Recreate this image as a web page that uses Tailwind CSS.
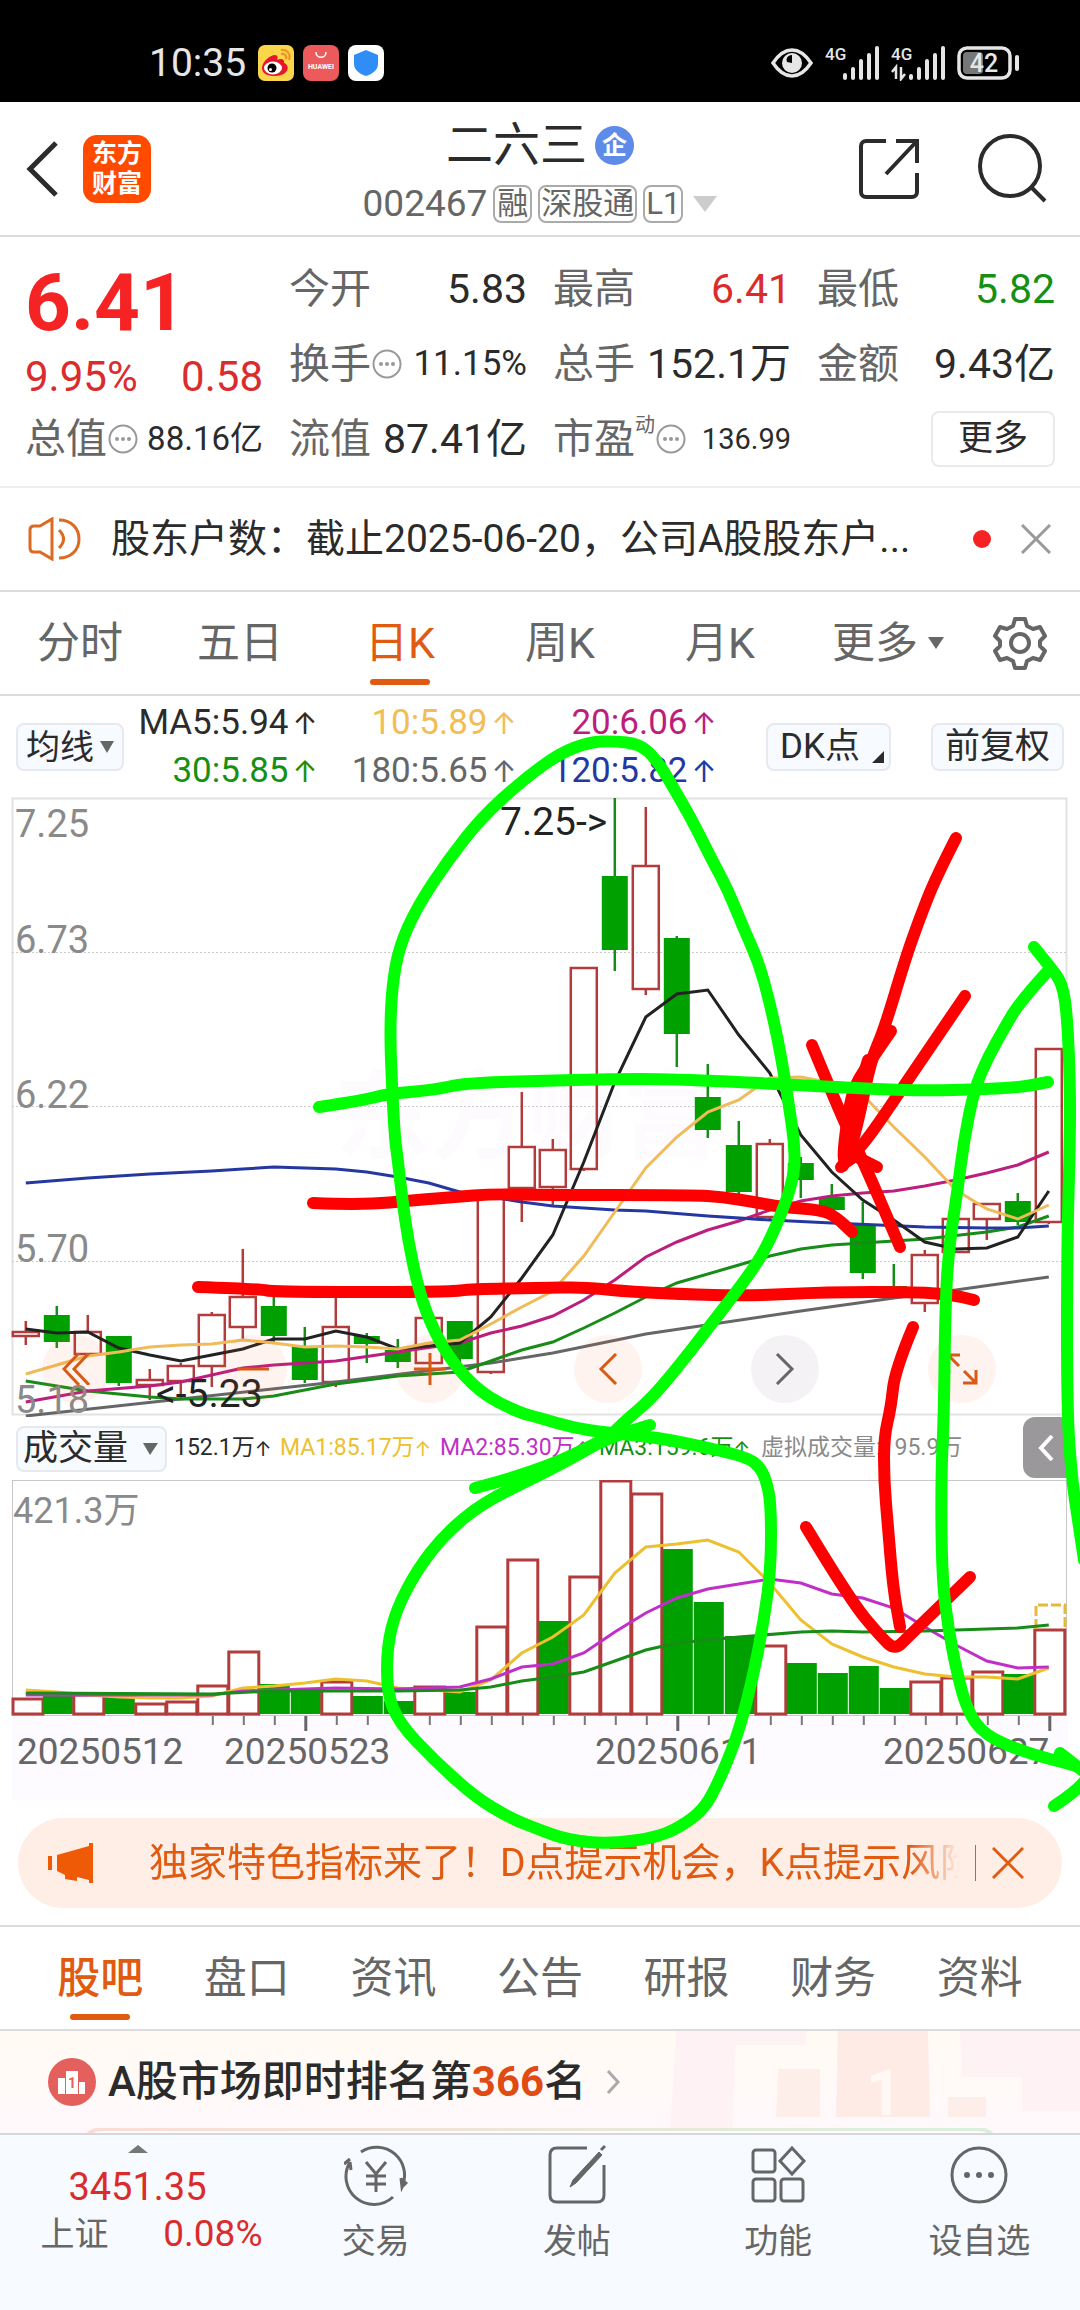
<!DOCTYPE html>
<html lang="zh-CN">
<head>
<meta charset="utf-8">
<meta name="viewport" content="width=device-width, initial-scale=1">
<title>二六三 002467</title>
<script src="https://cdn.jsdelivr.net/npm/@tailwindcss/browser@4"></script>
</head>
<body class="bg-white text-[#2b2b2b] font-[Roboto,'Noto_Sans_CJK_SC',sans-serif] overflow-x-hidden">

<!-- Status bar -->
<div class="flex h-[102px] items-center bg-black pt-6 pl-[149px] pr-[61px] text-[#e6e6e6]">
  <span class="text-[39px] leading-[48px]">10:35</span>
  <div class="ml-3 flex gap-[9px]">
    <svg class="size-9" viewBox="0 0 36 36"><rect width="36" height="36" rx="7" fill="#fbd64a"/><path d="M4 23c0-6 8-13 13-13 3 0 3 3 2 5 4-2 8-1 7 3 4 1 5 6 2 9-5 6-24 6-24-4z" fill="#e6162d"/><ellipse cx="15" cy="23" rx="9" ry="6.500" fill="#fff"/><circle cx="14" cy="23" r="4.500"/><circle cx="12.500" cy="24.500" r="1.500" fill="#fff"/><path d="M23 5c6-1 10 4 8 10M23 9c4-1 6 2 5 5" fill="none" stroke="#f0932a" stroke-width="2.200"/></svg>
    <svg class="size-9" viewBox="0 0 36 36"><rect width="36" height="36" rx="8" fill="#ec5a5c"/><path d="M13 7c0 7 10 7 10 0" fill="none" stroke="#fff" stroke-width="1.500"/><text x="18" y="24" font-size="7" font-weight="700" fill="#fff" text-anchor="middle">HUAWEI</text></svg>
    <svg class="size-9" viewBox="0 0 36 36"><rect width="36" height="36" rx="8" fill="#fff"/><path d="M18 5l12 5v9c0 6-6 10-12 12-6-2-12-6-12-12v-9z" fill="#2f8df5"/></svg>
  </div>
  <div class="ml-auto flex items-center gap-3">
    <svg class="h-8 w-[42px]" viewBox="0 0 42 32"><path d="M2 16C8 7 14 3 21 3s13 4 19 13c-6 9-12 13-19 13S8 25 2 16z" fill="none" stroke="currentColor" stroke-width="3.500"/><circle cx="21" cy="16" r="10" fill="currentColor"/><path d="M21 8a5 5 0 0 0-5 7l5 1z" fill="#000"/></svg>
    <svg class="h-9 w-[54px]" viewBox="0 0 54 36"><text x="0" y="15" font-size="17" font-weight="500" fill="currentColor">4G</text><path d="M20 30v3M28 24v9M36 16v17M44 10v23M52 3v30" stroke="currentColor" stroke-width="4" stroke-linecap="round"/></svg>
    <svg class="h-9 w-[54px]" viewBox="0 0 54 36"><text x="0" y="15" font-size="17" font-weight="500" fill="currentColor">4G</text><path d="M20 31v2M28 24v9M36 16v17M44 10v23M52 3v30" stroke="currentColor" stroke-width="4" stroke-linecap="round"/><path d="M5 34V22l-4 5M10 22v12l4-5" fill="none" stroke="currentColor" stroke-width="2.500"/></svg>
    <svg class="h-9 w-[62px]" viewBox="0 0 62 36"><rect x="2" y="3" width="51" height="30" rx="8" fill="none" stroke="currentColor" stroke-width="3.500"/><rect x="6" y="7" width="20" height="22" rx="4" fill="#777"/><path d="M60 12v12" stroke="currentColor" stroke-width="4" stroke-linecap="round"/><text x="27" y="27" font-size="25" font-weight="500" fill="currentColor" text-anchor="middle">42</text></svg>
  </div>
</div>

<!-- Title bar -->
<header class="relative flex h-[135px] items-center justify-between border-b-2 border-[#dcdcdc] pl-6 pr-8">
  <div class="flex items-center gap-[23px]">
    <button aria-label="返回"><svg class="h-[58px] w-9" viewBox="0 0 36 58"><path d="M32 3L6 29l26 26" fill="none" stroke="#2b2b2b" stroke-width="5"/></svg></button>
    <a href="#" class="flex size-[68px] flex-col items-center justify-center rounded-[14px] bg-[#ff4a00] text-[25px] leading-[30px] font-bold text-white"><span>东方</span><span>财富</span></a>
  </div>
  <div class="absolute inset-x-[300px] top-3 flex flex-col items-center">
    <h1 class="flex items-center gap-2 text-[47px] leading-[62px]">二六三<span class="flex size-[39px] items-center justify-center rounded-full bg-[#5f8be8] text-[25px] leading-none font-bold text-white">企</span></h1>
    <button class="mt-2 flex items-center gap-[6px] text-[37px] leading-[40px] text-[#666]">002467
      <span class="rounded-lg border-2 border-[#aaa] px-[2px] text-[31px] leading-[34px]">融</span><span class="rounded-lg border-2 border-[#aaa] px-px text-[31px] leading-[34px]">深股通</span><span class="rounded-lg border-2 border-[#aaa] px-px text-[31px] leading-[34px]">L1</span>
      <svg class="ml-1 h-4 w-6" viewBox="0 0 24 16"><path d="M0 0h24L12 16z" fill="#ccc"/></svg></button>
  </div>
  <div class="flex items-center gap-[58px]">
    <button aria-label="分享"><svg class="size-[62px]" viewBox="0 0 62 62" fill="none" stroke="#2b2b2b" stroke-width="4"><path d="M28 3H8a5 5 0 0 0-5 5v46a5 5 0 0 0 5 5h46a5 5 0 0 0 5-5V35M38 3h21v22M59 3L28 36"/></svg></button>
    <button aria-label="搜索"><svg class="size-[70px]" viewBox="0 0 70 70" fill="none" stroke="#2b2b2b" stroke-width="4"><circle cx="32" cy="32" r="30"/><path d="M53 53l14 14"/></svg></button>
  </div>
</header>

<!-- Quote -->
<section class="border-b-2 border-[#eee] px-[25px] pt-[14px] pb-[10px]">
  <div class="grid grid-cols-4 grid-rows-[75px_75px_75px] items-center gap-x-[26px] text-[41px] leading-[48px] whitespace-nowrap">
    <div class="row-span-2 self-start text-[#da2c2c]">
      <div class="pt-[6px] text-[80px] leading-[92px] font-bold text-[#f52323]">6.41</div>
      <div class="flex justify-between pt-1 text-[42px]"><span>9.95%</span><span>0.58</span></div>
    </div>
    <div class="flex items-center justify-between"><span class="text-[#666]">今开</span><span>5.83</span></div>
    <div class="flex items-center justify-between"><span class="text-[#666]">最高</span><span class="text-[#da2c2c]">6.41</span></div>
    <div class="flex items-center justify-between"><span class="text-[#666]">最低</span><span class="text-[#159015]">5.82</span></div>
    <div class="flex items-center justify-between"><span class="flex items-center text-[#666]">换手<svg class="size-8" viewBox="0 0 32 32"><use href="#info"/></svg></span><span class="text-[35px]">11.15%</span></div>
    <div class="flex items-center justify-between"><span class="text-[#666]">总手</span><span>152.1万</span></div>
    <div class="flex items-center justify-between"><span class="text-[#666]">金额</span><span>9.43亿</span></div>
    <div class="flex items-center justify-between"><span class="flex items-center text-[#666]">总值<svg class="size-8" viewBox="0 0 32 32"><use href="#info"/></svg></span><span class="text-[33px]">88.16亿</span></div>
    <div class="flex items-center justify-between"><span class="text-[#666]">流值</span><span>87.41亿</span></div>
    <div class="flex items-center justify-between"><span class="flex items-center text-[#666]">市盈<span class="self-start text-[20px] leading-none">动</span><svg class="size-8" viewBox="0 0 32 32"><use href="#info"/></svg></span><span class="text-[29px]">136.99</span></div>
    <button class="justify-self-end rounded-lg border-2 border-[#eaeaee] px-[25px] text-[35px] leading-[52px]">更多</button>
  </div>
  <svg class="hidden"><symbol id="info" viewBox="0 0 32 32"><circle cx="16" cy="16" r="13.500" fill="none" stroke="#999" stroke-width="2"/><g fill="#999"><circle cx="10" cy="16" r="2"/><circle cx="16" cy="16" r="2"/><circle cx="22" cy="16" r="2"/></g></symbol></svg>
</section>

<!-- Notice -->
<section class="flex h-[104px] items-center border-b-2 border-[#dcdcdc] pl-7 pr-[29px]">
  <svg class="h-[44px] w-[54px] shrink-0" viewBox="0 0 54 44" fill="none" stroke="#dd6a22" stroke-width="3"><path d="M2 13q0-4 4-4h6L24 2v40L12 35H6q-4 0-4-4zM31 13q9 9 0 18M31 3c12 0 20 8 20 19s-8 19-20 19"/></svg>
  <a href="#" class="ml-[29px] truncate text-[39px] leading-[52px]">股东户数：截止2025-06-20，公司A股股东户...</a>
  <span class="ml-auto size-[18px] shrink-0 rounded-full bg-[#f52323]"></span>
  <button aria-label="关闭" class="ml-[30px] shrink-0"><svg class="size-[30px]" viewBox="0 0 30 30"><path d="M1 1l28 28M29 1L1 29" stroke="#999" stroke-width="3"/></svg></button>
</section>

<!-- Period tabs -->
<nav class="flex h-[104px] items-center border-b-2 border-[#dcdcdc] text-[43px] leading-[60px] text-[#666]">
  <div class="grid flex-1 grid-cols-6 text-center">
    <a href="#">分时</a>
    <a href="#">五日</a>
    <a href="#" class="relative text-[#e05a10]">日K<span class="absolute -bottom-3 left-1/2 h-[6px] w-[60px] -translate-x-1/2 rounded-full bg-[#e05a10]"></span></a>
    <a href="#">周K</a>
    <a href="#">月K</a>
    <a href="#" class="flex items-center justify-end gap-[10px] pr-4">更多<svg class="h-3 w-4" viewBox="0 0 16 12"><path d="M0 0h16L8 12z" fill="#666"/></svg></a>
  </div>
  <button aria-label="设置" class="flex w-[120px] justify-center"><svg class="size-[54px]" viewBox="0 0 54 54" fill="none" stroke="#666" stroke-width="4" stroke-linejoin="round"><path d="M22 3h10l2 7 6 3 7-2 5 9-5 5v5l5 5-5 9-7-2-6 3-2 7H22l-2-7-6-3-7 2-5-9 5-5v-5l-5-5 5-9 7 2 6-3z"/><circle cx="27" cy="27" r="9"/></svg></button>
</nav>

<div class="relative">
  <!-- Moving averages -->
  <div class="flex h-[101px] items-center justify-between px-4">
    <button class="flex items-center gap-[6px] rounded-lg border-2 border-[#e6e9f0] bg-[#f7faff] px-2 text-[34px] leading-[44px]">均线<svg class="h-3 w-[14px]" viewBox="0 0 14 12"><path d="M0 0h14L7 12z" fill="#666"/></svg></button>
    <div class="mr-12 grid grid-cols-[192px_199px_200px] text-right text-[35px] leading-[48px] whitespace-nowrap *:flex *:items-center *:justify-end">
      <span>MA5:5.94<i class="pl-1 font-[Inter] text-[30px] not-italic">↑</i></span>
      <span class="text-[#f3bd55]">10:5.89<i class="pl-1 font-[Inter] text-[30px] not-italic">↑</i></span>
      <span class="text-[#bb1e7d]">20:6.06<i class="pl-1 font-[Inter] text-[30px] not-italic">↑</i></span>
      <span class="text-[#159015]">30:5.85<i class="pl-1 font-[Inter] text-[30px] not-italic">↑</i></span>
      <span class="text-[#666]">180:5.65<i class="pl-1 font-[Inter] text-[30px] not-italic">↑</i></span>
      <span class="text-[#2438a0]">120:5.82<i class="pl-1 font-[Inter] text-[30px] not-italic">↑</i></span>
    </div>
    <div class="flex gap-10">
      <button class="flex items-center gap-3 rounded-lg border-2 border-[#e6e9f0] bg-[#f7faff] pl-3 pr-[5px] text-[35px] leading-[44px]">DK点<svg class="mt-5 size-3" viewBox="0 0 12 12"><path d="M12 0v12H0z" fill="#2b2b2b"/></svg></button>
      <button class="rounded-lg border-2 border-[#e6e9f0] bg-[#f7faff] px-3 text-[35px] leading-[44px]">前复权</button>
    </div>
  </div>

  <!-- Candlestick chart -->
  <div class="relative">
    <svg id="price" class="block w-full" viewBox="0 797 1080 620" role="img" aria-label="日K线图"></svg>
    <div class="absolute right-[84px] bottom-[14px] left-[42px] flex justify-between *:flex *:size-[68px] *:items-center *:justify-center *:rounded-full *:bg-[#f4682a]/8 *:text-[#d85a15]">
      <button aria-label="最左"><svg class="h-8 w-7" viewBox="0 0 28 32" fill="none" stroke="currentColor" stroke-width="3"><path d="M17 0L2 16l15 16M27 0L12 16l15 16"/></svg></button>
      <button aria-label="缩小"><svg class="h-8 w-8" viewBox="0 0 32 32" stroke="currentColor" stroke-width="3"><path d="M0 16h32"/></svg></button>
      <button aria-label="放大"><svg class="h-8 w-8" viewBox="0 0 32 32" stroke="currentColor" stroke-width="3"><path d="M0 16h32M16 0v32"/></svg></button>
      <button aria-label="向左"><svg class="h-8 w-5" viewBox="0 0 20 32" fill="none" stroke="currentColor" stroke-width="3"><path d="M18 1L3 16l15 15"/></svg></button>
      <button aria-label="向右" class="bg-[#6b4a80]/7! text-[#666]!"><svg class="h-8 w-5" viewBox="0 0 20 32" fill="none" stroke="currentColor" stroke-width="3"><path d="M2 1l15 15L2 31"/></svg></button>
      <button aria-label="全屏"><svg class="size-8" viewBox="0 0 32 32" fill="none" stroke="currentColor" stroke-width="3"><path d="M2 16V2h12M2 2l11 11M30 17v13H17M30 30L18 18"/></svg></button>
    </div>
  </div>

  <!-- Volume header -->
  <div class="relative flex h-[63px] items-center pl-4 text-[23px] whitespace-nowrap">
    <button class="flex w-[151px] shrink-0 items-center justify-between rounded-lg border-2 border-[#e6e9f0] bg-[#f7faff] pl-[5px] pr-[7px] text-[35px] leading-[42px]">成交量<svg class="h-3 w-[15px]" viewBox="0 0 15 12"><path d="M0 0h15L7 12z" fill="#666"/></svg></button>
    <span class="ml-[7px] flex w-[106px] shrink-0 items-center">152.1万<i class="font-[Inter] text-[20px] not-italic">↑</i></span>
    <span class="flex w-[160px] shrink-0 items-center text-[#ecc02e]">MA1:85.17万<i class="font-[Inter] text-[20px] not-italic">↑</i></span>
    <span class="flex w-[159px] shrink-0 items-center text-[#c030c8]">MA2:85.30万<i class="font-[Inter] text-[20px] not-italic">↑</i></span>
    <span class="flex w-[162px] shrink-0 items-center text-[#159015]">MA3:159.6万<i class="font-[Inter] text-[20px] not-italic">↑</i></span>
    <span class="shrink-0 text-[#8a8a8a]">虚拟成交量:195.9万</span>
    <button aria-label="展开" class="absolute top-0 right-3 flex h-[61px] w-[45px] items-center justify-center rounded-l-xl bg-[#9a989b]"><svg class="h-7 w-4" viewBox="0 0 16 28" fill="none" stroke="#fff" stroke-width="4"><path d="M14 2L3 14l11 12"/></svg></button>
  </div>

  <!-- Volume chart -->
  <svg id="volume" class="block w-full" viewBox="0 1480 1080 320" role="img" aria-label="成交量图"></svg>

  <!-- Promotion -->
  <div class="px-[18px] pt-[18px] pb-[17px]">
    <div class="flex h-[90px] items-center rounded-full bg-[#ffeee6] pl-[30px] pr-[38px] text-[#e05a10]">
      <svg class="h-10 w-[46px] shrink-0" viewBox="0 0 46 40" fill="#ee5a05"><path d="M0 13h4v14H0zM9 12L41 3V0h4v40h-4v-3l-12-3v4l-12-2v-4l-8-4z"/></svg>
      <a href="#" class="ml-[55px] min-w-0 flex-1 overflow-hidden text-[39px] leading-[56px] whitespace-nowrap mask-r-from-94% mask-r-to-100%">独家特色指标来了！D点提示机会，K点提示风险</a>
      <span class="ml-4 h-9 w-px shrink-0 bg-[#e05a10]"></span>
      <button aria-label="关闭" class="ml-4 shrink-0"><svg class="size-8" viewBox="0 0 32 32"><path d="M1 1l30 30M31 1L1 31" stroke="#e05a10" stroke-width="3"/></svg></button>
    </div>
  </div>

  <!-- Hand-drawn marks -->
  <svg id="marks" class="pointer-events-none absolute inset-0 h-full w-full overflow-visible" viewBox="0 696 1080 1229" preserveAspectRatio="none" fill="none" stroke-width="12" stroke-linecap="round" stroke-linejoin="round"></svg>
</div>

<!-- Content tabs -->
<nav class="grid h-[106px] grid-cols-7 items-center border-y-2 border-[#dcdcdc] px-[27px] text-center text-[43px] leading-[60px] text-[#666]">
  <a href="#" class="relative font-medium text-[#e05a10]">股吧<span class="absolute -bottom-3 left-1/2 h-[6px] w-[60px] -translate-x-1/2 rounded-full bg-[#e05a10]"></span></a>
  <a href="#">盘口</a><a href="#">资讯</a><a href="#">公告</a><a href="#">研报</a><a href="#">财务</a><a href="#">资料</a>
</nav>

<!-- Ranking -->
<section class="relative h-[102px] overflow-hidden bg-linear-to-b from-[#fffbf3] to-[#fff8fc]">
  <svg class="absolute top-0 right-0 h-[102px] w-[410px]" viewBox="0 0 410 102"><path d="M6 0h130v14H66l-4 88H0z" fill="#fff2f5"/><path d="M108 38h42v48h-44zM278 66h38v20h-38z" fill="#feeeea"/><path d="M168 0h90l2 86h-94z" fill="#feebe6"/><path d="M290 0h120v80h-58V46h-60z" fill="#fff2f5"/><text x="214" y="84" font-size="64" font-weight="700" fill="#fff8f5" text-anchor="middle">1</text></svg>
  <a href="#" class="relative flex h-full items-center pl-12 text-[42px] leading-[56px] font-bold">
    <svg class="mr-3 size-12" viewBox="0 0 48 48"><circle cx="24" cy="24" r="24" fill="#e3605c"/><path d="M10 20h7v16h-7zM18 13h12v23H18zM31 24h6v12h-6z" fill="#fff"/><text x="24" y="30" font-size="14" fill="#e3605c" text-anchor="middle">1</text></svg>
    <span class="font-medium">A股市场即时排名第<b class="text-[#e04a14]">366</b>名</span>
    <svg class="ml-5 h-6 w-[14px]" viewBox="0 0 14 24" fill="none" stroke="#aaa" stroke-width="3"><path d="M2 1l10 11L2 23"/></svg>
  </a>
  <div class="absolute inset-x-[82px] top-[97px] h-12 rounded-2xl bg-linear-to-r from-[#fbdcd6] to-[#d9f0dc] p-[3px]"><div class="h-full rounded-2xl bg-[#fffafc]"></div></div>
</section>

<!-- Bottom bar -->
<nav class="flex h-[179px] border-t-2 border-[#d5d7dc] bg-[#f7faff] text-[34px] leading-[44px] text-[#666]">
  <a href="#" class="flex w-[275px] flex-col items-center pt-[10px] text-[#da2c2c]">
    <svg class="h-2 w-5" viewBox="0 0 20 8"><path d="M10 0l10 8H0z" fill="#777"/></svg>
    <span class="mt-[10px] text-[38px] leading-[48px]">3451.35</span>
    <span class="ml-7 flex w-[222px] justify-between pt-px text-[37px]"><span class="text-[34px] text-[#666]">上证</span>0.08%</span>
  </a>
  <a href="#" class="flex flex-1 flex-col items-center pt-2"><svg class="size-[64px]" viewBox="0 0 64 64" fill="none" stroke="currentColor" stroke-width="3"><path d="M17 9a28 28 0 0 1 41 35l-1-9M58 44l5-5M49 54A28 28 0 0 1 6 19M6 19l1 8M0 21l6-5M22 19l10 12 10-12M32 31v18M22 33h20M22 41h20"/></svg><span class="mt-3">交易</span></a>
  <a href="#" class="flex flex-1 flex-col items-center pt-2"><svg class="size-[64px]" viewBox="0 0 64 64" fill="none" stroke="currentColor" stroke-width="3"><path d="M42 5H12q-7 0-7 7v40q0 7 7 7h40q7 0 7-7V22"/><path d="M28 37L54 9l3 3-26 28-6 4z" fill="currentColor" stroke-width="1"/><path d="M56 7l4-4"/></svg><span class="mt-3">发帖</span></a>
  <a href="#" class="flex flex-1 flex-col items-center pt-2"><svg class="size-[64px]" viewBox="0 0 64 64" fill="none" stroke="currentColor" stroke-width="3"><rect x="7" y="7" width="22" height="22" rx="3"/><rect x="7" y="36" width="22" height="22" rx="3"/><rect x="35" y="36" width="22" height="22" rx="3"/><path d="M46 5l12 13-12 13-12-13z"/></svg><span class="mt-3">功能</span></a>
  <a href="#" class="flex flex-1 flex-col items-center pt-2"><svg class="size-[64px]" viewBox="0 0 64 64"><circle cx="32" cy="32" r="27" fill="none" stroke="currentColor" stroke-width="3"/><g fill="currentColor"><circle cx="20" cy="32" r="3"/><circle cx="32" cy="32" r="3"/><circle cx="44" cy="32" r="3"/></g></svg><span class="mt-3">设自选</span></a>
</nav>

<script>
const GREEN = '#00a000', RED = '#b23c3c';
const cx = i => 25.8 + 31 * i;
const line = (pts, color, dx = 0) =>
  `<polyline fill="none" stroke="${color}" stroke-width="3" points="${pts.map(([i, y]) => `${cx(i) + dx},${y}`).join(' ')}"/>`;
const seq = a => a.map((y, i) => [i, y]);

// direction, body top, body bottom, high, low
const candles = [
  ['r',1332,1336,1321,1345],['g',1315,1342,1306,1348],['r',1332,1354,1315,1354],['g',1336,1383,1336,1386],
  ['r',1380,1385,1369,1400],['r',1366,1381,1363,1398],['r',1315,1366,1312,1387],['r',1297,1327,1249,1340],
  ['g',1306,1336,1297,1342],['g',1347,1380,1327,1383],['r',1327,1382,1297,1387],['g',1336,1344,1333,1363],
  ['g',1350,1362,1339,1368],['r',1318,1363,1318,1363],['g',1321,1359,1321,1362],['r',1197,1372,1197,1374],
  ['r',1147,1188,1092,1222],['r',1150,1187,1139,1205],['r',968,1169,968,1171],['g',876,950,798,971],
  ['r',866,989,807,995],['g',938,1034,936,1067],['g',1097,1130,1064,1138],['g',1145,1192,1121,1195],
  ['r',1144,1217,1139,1219],['g',1163,1180,1157,1198],['g',1197,1210,1184,1210],['g',1225,1273,1202,1279],
  ['g',1286,1295,1264,1295],['r',1255,1303,1250,1312],['r',1219,1252,1219,1252],['r',1204,1219,1204,1240],
  ['g',1201,1222,1193,1225],['r',1049,1222,1049,1224]];
let p = `<text x="335" y="1150" font-size="96" font-weight="700" fill="#fefbff">东方财富</text>
<rect x="12.500" y="798.500" width="1054" height="616" fill="none" stroke="#e2e2e2" stroke-width="2"/>`;
for (const y of [952.5, 1106.5, 1261.5]) p += `<path d="M12 ${y}H1067" stroke="#ccc" stroke-dasharray="2 2"/>`;
candles.forEach(([d, t, b, h, l], i) => {
  const x = cx(i);
  p += d === 'g'
    ? `<path d="M${x} ${h}V${l}" stroke="#188c18" stroke-width="2.500"/><rect x="${x - 13}" y="${t}" width="26" height="${b - t}" fill="${GREEN}"/>`
    : `<path d="M${x} ${h}V${t}M${x} ${b}V${l}" stroke="${RED}" stroke-width="2.500"/><rect x="${x - 13}" y="${t}" width="26" height="${b - t}" fill="none" stroke="${RED}" stroke-width="2.500"/>`;
});
p += line([[0,1416],[10,1382],[15,1363],[17,1353],[20,1334],[25,1311],[28,1298],[30,1290],[33,1277]], '#666');
p += line([[0,1381],[2,1391],[4,1397],[5,1399],[7,1399],[8,1396],[10,1384],[12,1376],[14,1372],[15,1361],[16,1350],[17,1342],[18,1328],[19,1313],[20,1297],[21,1283],[23,1265],[24,1256],[25,1249],[26,1245],[27,1243],[29,1239],[31,1232],[32,1227],[33,1216]], '#188c18');
p += line([[0,1402],[2,1391],[4,1386],[5,1382],[6,1375],[7,1368],[8,1365],[10,1361],[12,1352],[14,1343],[15,1333],[16,1326],[17,1316],[18,1300],[19,1280],[20,1257],[21,1242],[22,1230],[23,1221],[24,1210],[25,1201],[26,1196],[27,1193],[28,1191],[29,1186],[30,1180],[31,1173],[32,1165],[33,1152]], '#bb1e7d');
p += line([[0,1183],[2,1178],[4,1174],[6,1171],[7,1169],[8,1167],[10,1169],[11,1172],[12,1177],[13,1183],[14,1192],[15,1197],[16,1202],[17,1206],[19,1210],[20,1211],[22,1216],[24,1220],[26,1223],[29,1227],[31,1228],[32,1228],[33,1226]], '#2438a0');
p += line(seq([1329,1333,1332,1348,1355,1361,1355,1349,1339,1339,1331,1337,1349,1346,1343,1317,1278,1235,1162,1082,1017,994,990,1035,1073,1135,1172,1200,1220,1242,1249,1248,1237,1191]), '#222');
p += line(seq([1374,1365,1356,1352,1347,1345,1344,1340,1343,1347,1346,1347,1349,1343,1340,1324,1307,1291,1256,1212,1168,1137,1112,1100,1078,1077,1083,1095,1127,1157,1190,1209,1219,1205]), '#f0bb5a');
[['7.25',837],['6.73',953],['6.22',1108],['5.70',1262],['5.18',1413]].forEach(([t, y]) =>
  p += `<text x="15" y="${y}" font-size="38" fill="#8a8a8a">${t}</text>`);
p += `<text x="500" y="835" font-size="39" fill="#222">7.25-&gt;</text><text x="156" y="1407" font-size="39" fill="#222">&lt;-5.23</text>`;
document.getElementById('price').innerHTML = p;

const volumes = [1699,1696,1695,1696,1704,1702,1686,1652,1684,1691,1682,1696,1701,1687,1692,1627,1560,1621,1577,1481,1494,1549,1602,1636,1646,1663,1673,1666,1688,1682,1678,1672,1674,1630];
const up = 'rgrgrrrrggrggrgrrgrrrgggrggggrrrgr';
let v = `<rect x="12" y="1716" width="1056" height="84" fill="#fdfbff"/><rect x="12.500" y="1480.500" width="1054" height="235" fill="none" stroke="#c8c8c8"/>`;
volumes.forEach((t, i) => {
  const x = cx(i) + 1;
  v += up[i] === 'g'
    ? `<rect x="${x - 15}" y="${t}" width="30" height="${1714 - t}" fill="${GREEN}"/>`
    : `<rect x="${Math.max(13, x - 15)}" y="${t}" width="30" height="${1714 - t}" fill="#fff" stroke="${RED}" stroke-width="3"/>`;
  if (i > 5) v += i % 12 === 9 ? `<path d="M${x} 1716V1731" stroke="#666" stroke-width="3"/>` : `<path d="M${x} 1716V1725" stroke="#777" stroke-width="2"/>`;
});
v += `<path d="M1036 1629V1605H1065V1629" fill="none" stroke="#e5b93a" stroke-width="3" stroke-dasharray="10 3"/>`;
v += line(seq([1690,1692,1695,1697,1698,1698,1696,1688,1686,1683,1679,1681,1688,1690,1692,1680,1653,1637,1615,1573,1547,1544,1540,1552,1583,1620,1644,1657,1667,1674,1677,1677,1679,1668]), '#ecc02e');
v += line([[0,1695],[6,1695],[7,1691],[9,1689],[10,1688],[12,1689],[14,1687],[15,1679],[16,1667],[17,1664],[18,1653],[19,1632],[20,1613],[21,1598],[22,1589],[23,1584],[24,1579],[25,1583],[26,1594],[27,1598],[28,1608],[29,1627],[30,1645],[31,1661],[32,1668],[33,1667]], '#c030c8');
v += line([[0,1693],[6,1694],[8,1691],[12,1691],[14,1690],[15,1687],[16,1681],[17,1677],[18,1672],[19,1661],[20,1650],[21,1643],[23,1637],[25,1632],[26,1631],[27,1632],[29,1631],[31,1629],[32,1628],[33,1625]], '#188c18');
v += `<text x="13" y="1523" font-size="36" fill="#8a8a8a">421.3万</text>`;
[['20250512',17],['20250523',224],['20250611',595],['20250627',883]].forEach(([t, x]) =>
  v += `<text x="${x}" y="1764" font-size="37" fill="#666">${t}</text>`);
document.getElementById('volume').innerHTML = v;

// Freehand strokes, smoothed through the midpoints of their samples
const smooth = s => {
  const q = s.split(' ').map(a => a.split(',').map(Number));
  let d = `M${q[0]}`;
  for (let i = 1; i < q.length - 1; i++) d += `Q${q[i]} ${(q[i][0] + q[i + 1][0]) / 2},${(q[i][1] + q[i + 1][1]) / 2}`;
  return d + `L${q[q.length - 1]}`;
};
const red = [
  '313,1203 362,1205 417,1200 455,1197 492,1194 540,1195 692,1195 723,1197 754,1202 781,1207 822,1210 836,1217 852,1232',
  '198,1287 258,1289 276,1292 448,1292 472,1289 540,1288 585,1287 619,1291 678,1294 750,1296 826,1292 919,1292 953,1295 974,1300',
  '956,838 936,877 919,920 905,960 884,1030 871,1060 860,1113 852,1145 843,1166',
  '891,1031 864,1070 853,1090 847,1120 842,1165 852,1158',
  '868,1060 856,1100 850,1140',
  '812,1045 843,1120 864,1163 900,1247',
  '965,996 908,1080 867,1140 855,1152 841,1167',
  '877,1167 857,1157',
  '913,1327 895,1370 891,1407 884,1437 884,1480 888,1527 893,1587 900,1627',
  '806,1527 850,1600 881,1637 895,1650 908,1637 970,1577'];
const green = [
  '650,1425 609,1437 574,1457 540,1475 482,1503 444,1535 417,1570 396,1610 387,1647 387,1693 399,1723 434,1760 475,1797 510,1818 540,1830 568,1840 609,1844 660,1837 688,1822 705,1807 716,1787 728,1760 740,1727 753,1677 764,1620 771,1567 771,1503 766,1480 760,1467 747,1457 695,1445 654,1437 609,1433 574,1428 540,1418 517,1412 479,1392 448,1357 429,1320 418,1287 408,1240 402,1197 397,1153 395,1140 392,1087 390,1033 392,987 399,947 417,907 448,860 482,817 523,780 560,753 590,742 613,741 640,744 657,760 673,787 692,820 712,860 728,890 743,927 759,963 769,1000 778,1040 785,1080 790,1113 794,1140 795,1170 786,1203 764,1253 740,1287 709,1327 678,1367 650,1400 626,1420 609,1437',
  '475,1488 540,1471 609,1437',
  '319,1107 365,1100 386,1094 434,1090 465,1083 540,1081 609,1079 674,1079 781,1084 833,1087 919,1091 988,1089 1022,1087 1048,1082',
  '1034,947 1051,968 1062,983 1067,1013 1070,1080 1070,1140 1067,1250 1067,1413 1072,1480 1078,1520 1084,1560',
  '1046,973 1019,1003 1005,1027 988,1057 974,1090 964,1140 958,1187 948,1253 945,1320 944,1413 941,1480 942,1577 948,1627 957,1673 967,1710 984,1735 1026,1753 1074,1765 1090,1772',
  '1060,1753 1088,1775',
  '1054,1806 1074,1793 1090,1775'];
document.getElementById('marks').innerHTML =
  `<g stroke="#ff0000">${red.map(s => `<path d="${smooth(s)}"/>`).join('')}</g><g stroke="#00ff00">${green.map(s => `<path d="${smooth(s)}"/>`).join('')}</g>`;
</script>
</body>
</html>
